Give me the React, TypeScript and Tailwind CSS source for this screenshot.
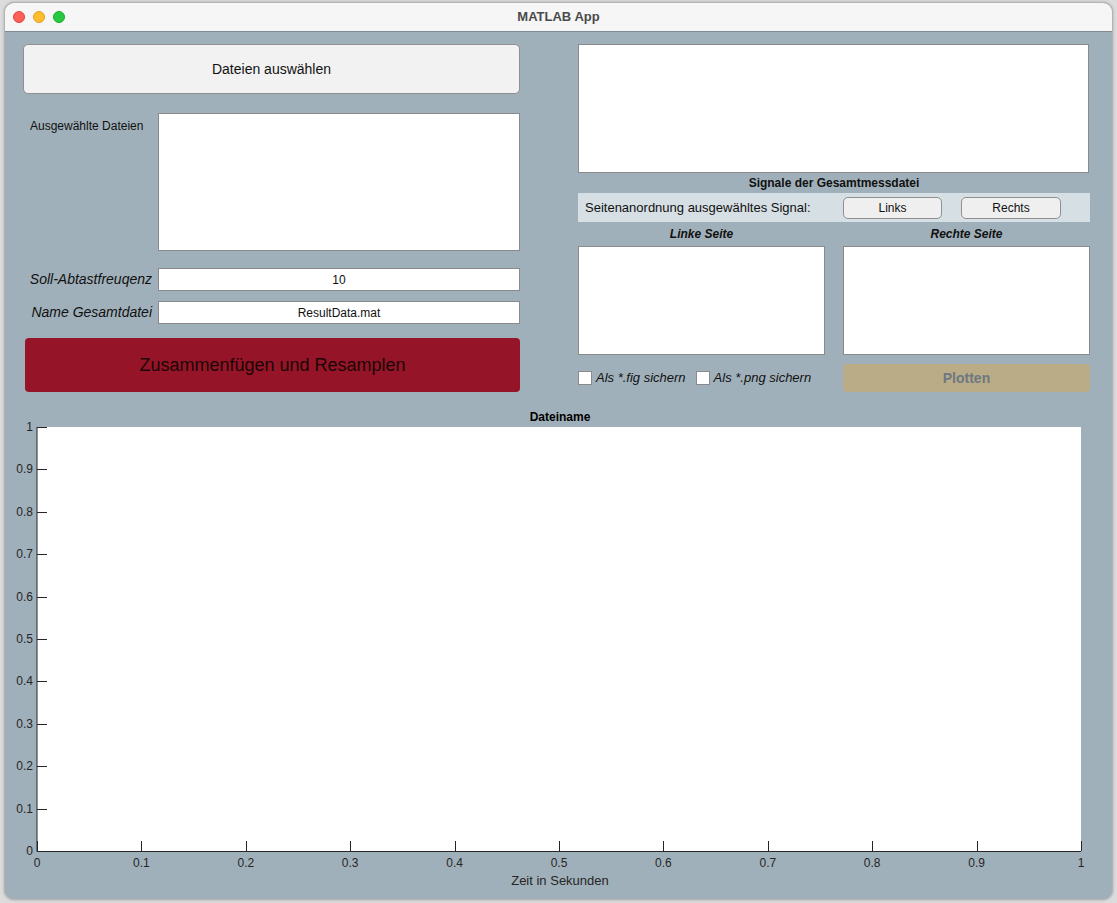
import React from "react";

const font = { fontFamily: '"Liberation Sans", Arial, sans-serif' };

const yTicks = [0, 0.1, 0.2, 0.3, 0.4, 0.5, 0.6, 0.7, 0.8, 0.9, 1];

// axes drawn in page coordinates via viewBox
const PlotAxes: React.FC = () => {
  const x0 = 37;
  const x1 = 1081;
  const y0 = 851;
  const y1 = 427;
  const sx = (v: number) => x0 + v * (x1 - x0);
  const sy = (v: number) => y0 - v * (y0 - y1);
  return (
    <svg width={1107} height={494} viewBox="5 404 1107 494" className="block" style={font}>
      <text x={560} y={421} textAnchor="middle" fontSize={12} fontWeight={700} fill="#000">
        Dateiname
      </text>
      <rect x={x0} y={y1} width={x1 - x0} height={y0 - y1} fill="#fff" />
      <line x1={x0} y1={y1} x2={x0} y2={y0 + 0.5} stroke="#262626" strokeWidth={1} />
      <line x1={x0} y1={y0 + 0.5} x2={x1} y2={y0 + 0.5} stroke="#262626" strokeWidth={1} />
      {yTicks.map((t) => (
        <g key={"y" + t}>
          <line x1={x0} y1={Math.round(sy(t)) + 0.5} x2={x0 + 10} y2={Math.round(sy(t)) + 0.5} stroke="#262626" />
          <text x={33} y={sy(t) + 4} textAnchor="end" fontSize={12} fill="#262626">
            {t}
          </text>
        </g>
      ))}
      {yTicks.map((t) => (
        <g key={"x" + t}>
          <line x1={Math.round(sx(t)) + 0.5} y1={y0} x2={Math.round(sx(t)) + 0.5} y2={y0 - 10} stroke="#262626" />
          <text x={sx(t)} y={867} textAnchor="middle" fontSize={12} fill="#262626">
            {t}
          </text>
        </g>
      ))}
      <text x={560} y={885} textAnchor="middle" fontSize={13} fill="#262626">
        Zeit in Sekunden
      </text>
    </svg>
  );
};

const Checkbox: React.FC<{ label: string }> = ({ label }) => (
  <label className="flex items-center gap-[4px] text-[13px] italic text-[#111]">
    <span className="block h-[14px] w-[14px] border border-[#8a8a8a] bg-white" />
    {label}
  </label>
);

export default function App() {
  return (
    <div className="h-[903px] w-[1117px] bg-[#dcdcdc] px-[4px] pt-[2px]" style={font}>
      <div className="flex h-[898px] flex-col overflow-hidden rounded-[10px] border border-[#b4b4b4] bg-[#a0b0ba] shadow-[0_0_3px_rgba(0,0,0,0.25)]">
        {/* title bar */}
        <div className="relative flex h-[29px] shrink-0 items-center justify-center border-b border-[#7f8a92] bg-[#f6f6f6]">
          <div className="absolute left-[8px] top-[8px] flex gap-[8px]">
            <span className="block h-[12px] w-[12px] rounded-full border border-[#e0443e] bg-[#fe5f57]" />
            <span className="block h-[12px] w-[12px] rounded-full border border-[#dea123] bg-[#febc2e]" />
            <span className="block h-[12px] w-[12px] rounded-full border border-[#1aab29] bg-[#28c840]" />
          </div>
          <span className="text-[13px] font-bold text-[#4b4b4b]">MATLAB App</span>
        </div>

        {/* controls */}
        <div className="flex gap-[58px] pl-[18px] pt-[12px]">
          {/* left column */}
          <div className="flex w-[497px] flex-col">
            <button className="h-[50px] rounded-[5px] border border-[#8f8f8f] bg-[#f2f2f2] text-[14px] text-[#111]">
              Dateien auswählen
            </button>
            <div className="mt-[19px] flex">
              <div className="w-[135px] pl-[7px] pt-[4px] text-[12px] text-[#111]">Ausgewählte Dateien</div>
              <div className="h-[138px] w-[362px] border border-[#8a8a8a] bg-white" />
            </div>
            <div className="mt-[17px] flex items-center">
              <div className="w-[135px] pr-[6px] text-right text-[14px] italic text-[#111]">Soll-Abtastfreuqenz</div>
              <div className="flex h-[23px] w-[362px] items-center justify-center border border-[#8a8a8a] bg-white text-[12px] text-[#111]">
                10
              </div>
            </div>
            <div className="mt-[10px] flex items-center">
              <div className="w-[135px] pr-[6px] text-right text-[14px] italic text-[#111]">Name Gesamtdatei</div>
              <div className="flex h-[23px] w-[362px] items-center justify-center border border-[#8a8a8a] bg-white text-[12px] text-[#111]">
                ResultData.mat
              </div>
            </div>
            <button className="ml-[2px] mt-[14px] h-[54px] w-[495px] rounded-[4px] bg-[#961428] text-[18px] text-[#1a0606]">
              Zusammenfügen und Resamplen
            </button>
          </div>

          {/* right column */}
          <div className="flex w-[512px] flex-col">
            <div className="h-[129px] w-[511px] border border-[#8a8a8a] bg-white" />
            <div className="mt-[3px] text-center text-[12px] font-bold leading-[15px] text-[#111]">
              Signale der Gesamtmessdatei
            </div>
            <div className="mt-[2px] flex h-[29px] items-center bg-[#d6dfe4] pl-[7px]">
              <span className="w-[258px] text-[13px] text-[#111]">Seitenanordnung ausgewähltes Signal:</span>
              <button className="h-[22px] w-[99px] rounded-[5px] border border-[#8f8f8f] bg-[#efefef] text-[12px] text-[#111]">
                Links
              </button>
              <button className="ml-[19px] h-[22px] w-[100px] rounded-[5px] border border-[#8f8f8f] bg-[#efefef] text-[12px] text-[#111]">
                Rechts
              </button>
            </div>
            <div className="mt-[5px] grid grid-cols-2 gap-x-[18px]">
              <div className="text-center text-[12px] font-bold italic leading-[15px] text-[#111]">Linke Seite</div>
              <div className="text-center text-[12px] font-bold italic leading-[15px] text-[#111]">Rechte Seite</div>
              <div className="mt-[4px] h-[109px] border border-[#8a8a8a] bg-white" />
              <div className="mt-[4px] h-[109px] border border-[#8a8a8a] bg-white" />
            </div>
            <div className="mt-[9px] grid grid-cols-2 gap-x-[18px]">
              <div className="flex items-center gap-[10px]">
                <Checkbox label="Als *.fig sichern" />
                <Checkbox label="Als *.png sichern" />
              </div>
              <button className="h-[28px] rounded-[4px] bg-[#b9ac86] text-[14px] font-bold text-[#6e7882]">
                Plotten
              </button>
            </div>
          </div>
        </div>

        {/* axes */}
        <div className="mt-[12px]">
          <PlotAxes />
        </div>
      </div>
    </div>
  );
}
